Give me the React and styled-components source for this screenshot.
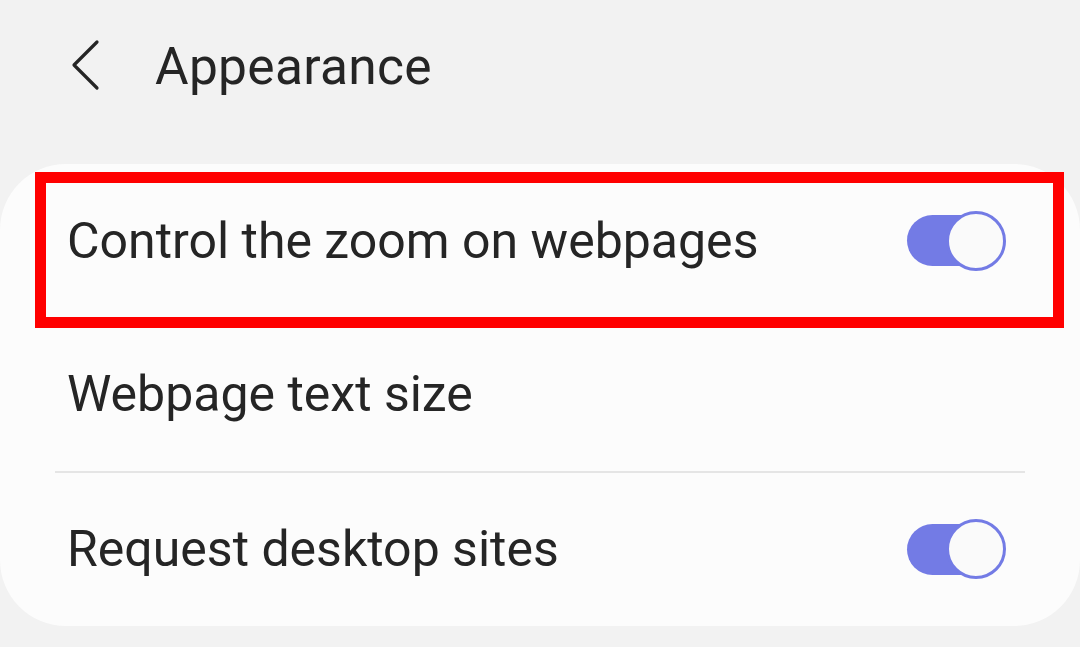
import React from "react";
import styled, { createGlobalStyle } from "styled-components";

const GlobalStyle = createGlobalStyle`
  html, body {
    margin: 0;
    padding: 0;
    background: #f2f2f2;
    font-family: Roboto, "Liberation Sans", sans-serif;
  }
`;

const rows = [
  { label: "Control the zoom on webpages", toggle: true, highlight: true },
  { label: "Webpage text size", toggle: false },
  { label: "Request desktop sites", toggle: true, divider: true },
];

function BackIcon() {
  return (
    <svg width="30" height="52" viewBox="0 0 30 52" fill="none">
      <path
        d="M27 3 L4 26 L27 49"
        stroke="#252525"
        strokeWidth="3.2"
        strokeLinecap="round"
        strokeLinejoin="round"
      />
    </svg>
  );
}

function App() {
  return (
    <Screen>
      <GlobalStyle />
      <Header>
        <BackButton>
          <BackIcon />
        </BackButton>
        <Title>Appearance</Title>
      </Header>
      <Card>
        {rows.map((row) => (
          <React.Fragment key={row.label}>
            {row.divider && <Divider />}
            <Row>
              <Label>{row.label}</Label>
              {row.toggle && (
                <Switch>
                  <Knob />
                </Switch>
              )}
              {row.highlight && <Highlight />}
            </Row>
          </React.Fragment>
        ))}
      </Card>
    </Screen>
  );
}

const Screen = styled.div`
  width: 1080px;
  height: 647px;
  overflow: hidden;
  background: #f2f2f2;
`;

const Header = styled.div`
  height: 164px;
  display: flex;
  align-items: flex-start;
  padding: 39px 0 0 70px;
  box-sizing: border-box;
`;

const BackButton = styled.div`
  width: 30px;
  height: 52px;
  display: flex;
  align-items: center;
`;

const Title = styled.div`
  margin-left: 55px;
  font-size: 51.5px;
  line-height: 56px;
  color: #252525;
  letter-spacing: 0.3px;
`;

const Card = styled.div`
  background: #fcfcfc;
  border-radius: 66px;
  height: 462px;
  display: flex;
  flex-direction: column;
`;

const Row = styled.div`
  position: relative;
  height: 154px;
  display: flex;
  align-items: center;
  justify-content: space-between;
  padding: 0 74px 0 67px;
  box-sizing: border-box;
`;

const Label = styled.div`
  font-size: 50px;
  line-height: 56px;
  color: #252525;
  letter-spacing: 0;
`;

const Switch = styled.div`
  position: relative;
  width: 99px;
  height: 51px;
  display: flex;
  align-items: center;
  justify-content: flex-end;
  &::before {
    content: "";
    position: absolute;
    left: 0;
    top: 0;
    width: 80px;
    height: 51px;
    border-radius: 26px;
    background: #737be5;
  }
`;

const Knob = styled.div`
  position: relative;
  width: 54px;
  height: 54px;
  border-radius: 50%;
  background: #fafafa;
  border: 3px solid #737be5;
`;

const Divider = styled.div`
  height: 2px;
  margin: 0 55px;
  background: #e5e5e5;
`;

const Highlight = styled.div`
  position: absolute;
  top: 8px;
  bottom: -11px;
  left: 35px;
  right: 16px;
  border: 11px solid #ff0000;
  pointer-events: none;
`;

export default App;
